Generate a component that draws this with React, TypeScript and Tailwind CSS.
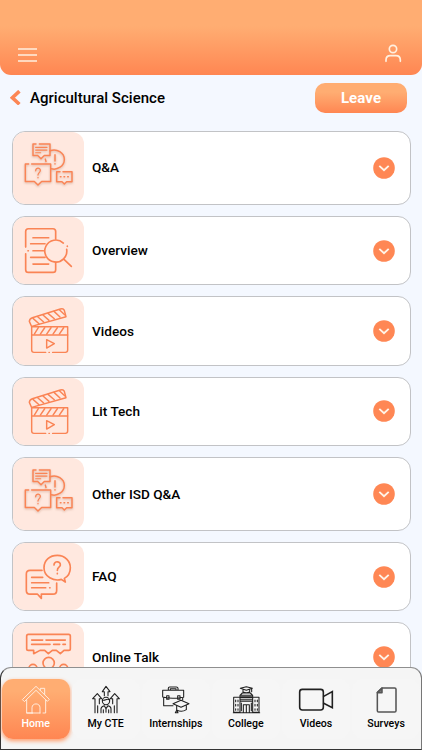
import type { ReactNode } from "react";

const tile = "block h-full w-[72px] shrink-0";
const line = { fill: "none", stroke: "#fa8455", strokeWidth: 5, strokeLinecap: "round", strokeLinejoin: "round" } as const;

function QuestionsIcon() {
  return (
    <svg className={tile + " drop-shadow-[0_1px_1px_rgba(150,80,50,0.35)]"} viewBox="23 22 216 213" {...line} strokeWidth={4.4}>
      <path d="M92 58H83V92H97L107 102L117 92H134V58H102" />
      <path d="M91 68H125M91 76H125M91 84H106" strokeWidth={3.5} />
      <path d="M134 78C155 70 177 84 177 104C177 124 156 137 138 132M120 103L122 110" />
      <path d="M149 90V109M149 117V118" />
      <path d="M70 118H60V170H87L98 181L109 170H136V118H79" />
      <path d="M91 138C91 127 106 128 105 138C104 144 98 144 98 151M98 158V159" strokeWidth={3.8} />
      <path d="M164 141H154V171H170L177 178L184 171H200V141H173" />
      <path d="M165 156H167M176 156H178M187 156H189" />
    </svg>
  );
}

function OverviewIcon() {
  return (
    <svg className={tile} viewBox="23 21 216 201" {...line}>
      <path d="M61 111V64Q61 56 69 56H143Q151 56 151 64V87M61 131V179Q61 187 69 187H143Q151 187 151 179V157" />
      <path d="M83 83H130M76 101H119M83 122H114M76 142H119M83 162H130M68 122H69" />
      <path d="M174 99A33 33 0 1 0 184 118M186 108V109M176 148L198 169" />
    </svg>
  );
}

function VideosIcon() {
  return (
    <svg className={tile} viewBox="23 21 216 201" {...line} strokeWidth={4.4}>
      <path d="M79 110V180Q79 187 86 187H121M131 187H132M142 187H180Q187 187 187 180V110H79L72 94Q72 86 81 83L165 57Q174 54 177 61L182 80L79 109" />
      <path d="M79 135H187M83 85L101 101M97 80L115 96M113 75L131 91M128 70L147 86M146 64L164 81M162 59L178 74" />
      <path d="M99 113L87 132M118 113L105 132M137 113L124 132M156 113L143 132M175 113L162 132" />
      <path d="M124 149V174L147 161Z" />
    </svg>
  );
}

function FaqIcon() {
  return (
    <svg className={tile} viewBox="23 21 216 201" {...line}>
      <path d="M110 103H74Q63 103 63 114V163Q63 174 74 174H96L108 187V174H143Q154 174 154 163V141" />
      <path d="M79 124H112M79 140H130M79 155H121M133 155H134" />
      <path d="M177 127L180 138L168 130C145 137 116 122 116 95C116 72 134 58 156 58C179 58 195 75 195 95C195 109 188 121 177 127Z" />
      <path d="M146 87C146 73 166 75 165 87C164 94 156 93 156 103M156 112V113" />
    </svg>
  );
}

function TalkIcon() {
  return (
    <svg className={tile} viewBox="38 25 216 201" {...line}>
      <path d="M84 59H205Q210 59 210 64V102Q210 107 205 107H191L180 117L168 107H156L144 117L133 107H119L100 117V107H84Q79 107 79 102V64Q79 59 84 59Z" />
      <path d="M94 76H127M137 76H195M94 89H149M160 89H178M188 89H195" />
      <circle cx="145" cy="145" r="17" />
      <circle cx="98" cy="161" r="12" /><circle cx="190" cy="161" r="12" />
      <path d="M111 210C111 174 178 174 178 210" />
    </svg>
  );
}

const topics: { title: string; icon: ReactNode; tall?: boolean }[] = [
  { title: "Q&A", icon: <QuestionsIcon />, tall: true },
  { title: "Overview", icon: <OverviewIcon /> },
  { title: "Videos", icon: <VideosIcon /> },
  { title: "Lit Tech", icon: <VideosIcon /> },
  { title: "Other ISD Q&A", icon: <QuestionsIcon />, tall: true },
  { title: "FAQ", icon: <FaqIcon /> },
  { title: "Online Talk", icon: <TalkIcon /> },
];

const navSvg = { fill: "none", stroke: "#202020", strokeWidth: 3.2, strokeLinecap: "round", strokeLinejoin: "round", className: "block h-[30px] w-[36px]" } as const;

const navItems: { label: string; icon: ReactNode }[] = [
  {
    label: "Home",
    icon: (
      <svg {...navSvg} viewBox="53 209 108 90" stroke="#fff0e4" strokeWidth={2.8}>
        <path d="M67 252L107 213L147 252L141 258L107 225L73 258ZM120 225V219H133V237M79 254V293H119M136 254V293H128M95 293V277C95 262 119 262 119 277V293M79 293H97" />
      </svg>
    ),
  },
  {
    label: "My CTE",
    icon: (
      <svg {...navSvg} viewBox="263 209 108 90">
        <path d="M312 241V229H306L317 213L329 229H323V241M284 292V250H277L291 235L304 250H297V265M284 269V292M292 271V292M350 292V250H357L343 235L330 250H337V265M350 269V292M342 271V292" />
        <circle cx="317" cy="257" r="11" />
        <path d="M306 254C315 258 319 247 328 254M302 292V280Q303 273 312 271L317 280L323 271Q332 273 332 280V292M317 281V291M309 283V292M325 283V292" />
      </svg>
    ),
  },
  {
    label: "Internships",
    icon: (
      <svg {...navSvg} viewBox="53 89 108 90">
        <path d="M84 104V99Q84 95 88 95H108Q113 95 113 99V104M90 104V100H107V104M67 105H130V126Q112 129 98 129Q82 129 67 125ZM70 128V151H98M127 128V134M79 121H86V132H79ZM112 121H119V132H112Z" />
        <path d="M98 145L122 135L146 145L122 156ZM109 152V164Q124 172 138 163V150M109 151V165L105 172H113L109 165" />
      </svg>
    ),
  },
  {
    label: "College",
    icon: (
      <svg {...navSvg} viewBox="263 89 108 90">
        <path d="M300 99L318 94L336 99L318 105ZM308 103V110Q318 115 328 110V103M334 101V109M299 120L306 113H330L337 120V127H299ZM302 120H334M302 124H334M280 126H299V171H280ZM337 126H356V171H337ZM299 133H337M299 138H337M309 171V148H327V171M318 149V171M279 172H358" />
        <path d="M286 134V139M293 134V139M286 147V152M293 147V152M286 160V165M293 160V165M344 134V139M351 134V139M344 147V152M351 147V152M344 160V165M351 160V165M303 143V166M333 143V166" />
      </svg>
    ),
  },
  {
    label: "Videos",
    icon: (
      <svg {...navSvg} viewBox="54 89 108 90" strokeWidth={4.8}>
        <rect x="59" y="102" width="71" height="62" rx="8" />
        <path d="M131 123L157 109V157L131 144" strokeLinejoin="miter" />
      </svg>
    ),
  },
  {
    label: "Surveys",
    icon: (
      <svg {...navSvg} viewBox="265 89 108 90" stroke="#555" strokeWidth={4.6}>
        <path d="M307 98H345Q349 98 349 102V166Q349 170 345 170H297Q293 170 293 166V112Z" />
        <path d="M307 98V112H293Z" fill="#777" />
      </svg>
    ),
  },
];

export default function App() {
  return (
    <div className="relative flex h-[750px] w-full flex-col overflow-hidden bg-[#f4f8ff] font-[Roboto,sans-serif] text-black">
      <header className="flex h-[75px] shrink-0 items-end justify-between rounded-b-[11px] bg-linear-to-b from-[#ffad72] from-35% to-[#ff8652] pr-[19px] pl-[18px]">
        <svg className="mb-[12px] h-[16px] w-[19px]" viewBox="0 0 19 16" stroke="#fff0df" strokeWidth="1.7">
          <path d="M0 2H19M0 8H19M0 14H19" />
        </svg>
        <svg className="mb-[12px] h-[19px] w-[18px]" viewBox="522 132 54 57" fill="none" stroke="#fff0df" strokeWidth="5" strokeLinecap="round">
          <circle cx="546" cy="147" r="11" />
          <path d="M525 184V180Q525 167 538 167H555Q568 167 568 180V184" />
        </svg>
      </header>

      <div className="flex h-[56px] shrink-0 items-start pr-[15px] pl-[10px]">
        <svg className="mt-[15px] h-[15px] w-[11px]" viewBox="0 0 11 15" fill="none" stroke="#fc8655" strokeWidth="3.6">
          <path d="M9.4 1.2L2.4 7.7L9.4 14.2" />
        </svg>
        <h1 className="mt-[13px] ml-[9px] text-[15px] leading-[20px] font-medium tracking-[0.02px]">Agricultural Science</h1>
        <button className="mt-[8px] ml-auto h-[30px] w-[92px] rounded-[10px] bg-linear-to-b from-[#ffad72] from-30% to-[#ff8652] text-[15px] leading-[29px] font-bold tracking-[0.1px] text-white">
          Leave
        </button>
      </div>

      <main className="flex flex-col gap-[11.4px] pt-[0.4px] pr-[11.5px] pl-[11.5px]">
        {topics.map((topic) => (
          <section
            key={topic.title}
            className={`flex shrink-0 items-center overflow-hidden rounded-[13px] border border-[#c2c3c6] bg-white pr-[15px] ${topic.tall ? "h-[73.2px]" : "h-[69.1px]"}`}
          >
            <div className="h-full w-[71px] shrink-0 overflow-hidden rounded-[12px] bg-[#ffe8df]">{topic.icon}</div>
            <h2 className="mb-px ml-[8.5px] text-[13.6px] leading-[20px] font-medium">{topic.title}</h2>
            <svg className="ml-auto size-[22px]" viewBox="0 0 22 22" fill="none">
              <circle cx="11" cy="11" r="10.8" fill="#ff8754" />
              <path d="M6.3 8.9L11 13.2L15.7 8.9" stroke="#fff4e8" strokeWidth="1.9" />
            </svg>
          </section>
        ))}
      </main>

      <nav className="absolute inset-x-0 bottom-0 flex h-[83px] rounded-t-[11px] border border-t-[#8f8f8f] border-r-[#777] border-b-[#333] border-l-[#333] bg-[#f5f5f5] pt-[11px] pl-[0.6px]">
        {navItems.map((item, index) => (
          <button
            key={item.label}
            className={`mr-[2.1px] flex h-[60px] w-[68px] shrink-0 flex-col items-center rounded-[11px] pt-[6px] ${
              index === 0
                ? "bg-linear-to-b from-[#ffad72] from-20% to-[#ff8652] text-white shadow-[0_2px_4px_#ff9b68]"
                : "bg-[#f6f6f6]"
            }`}
          >
            {item.icon}
            <span className="mt-[2px] text-[10.6px] leading-[14px] font-medium whitespace-nowrap">{item.label}</span>
          </button>
        ))}
      </nav>
    </div>
  );
}
